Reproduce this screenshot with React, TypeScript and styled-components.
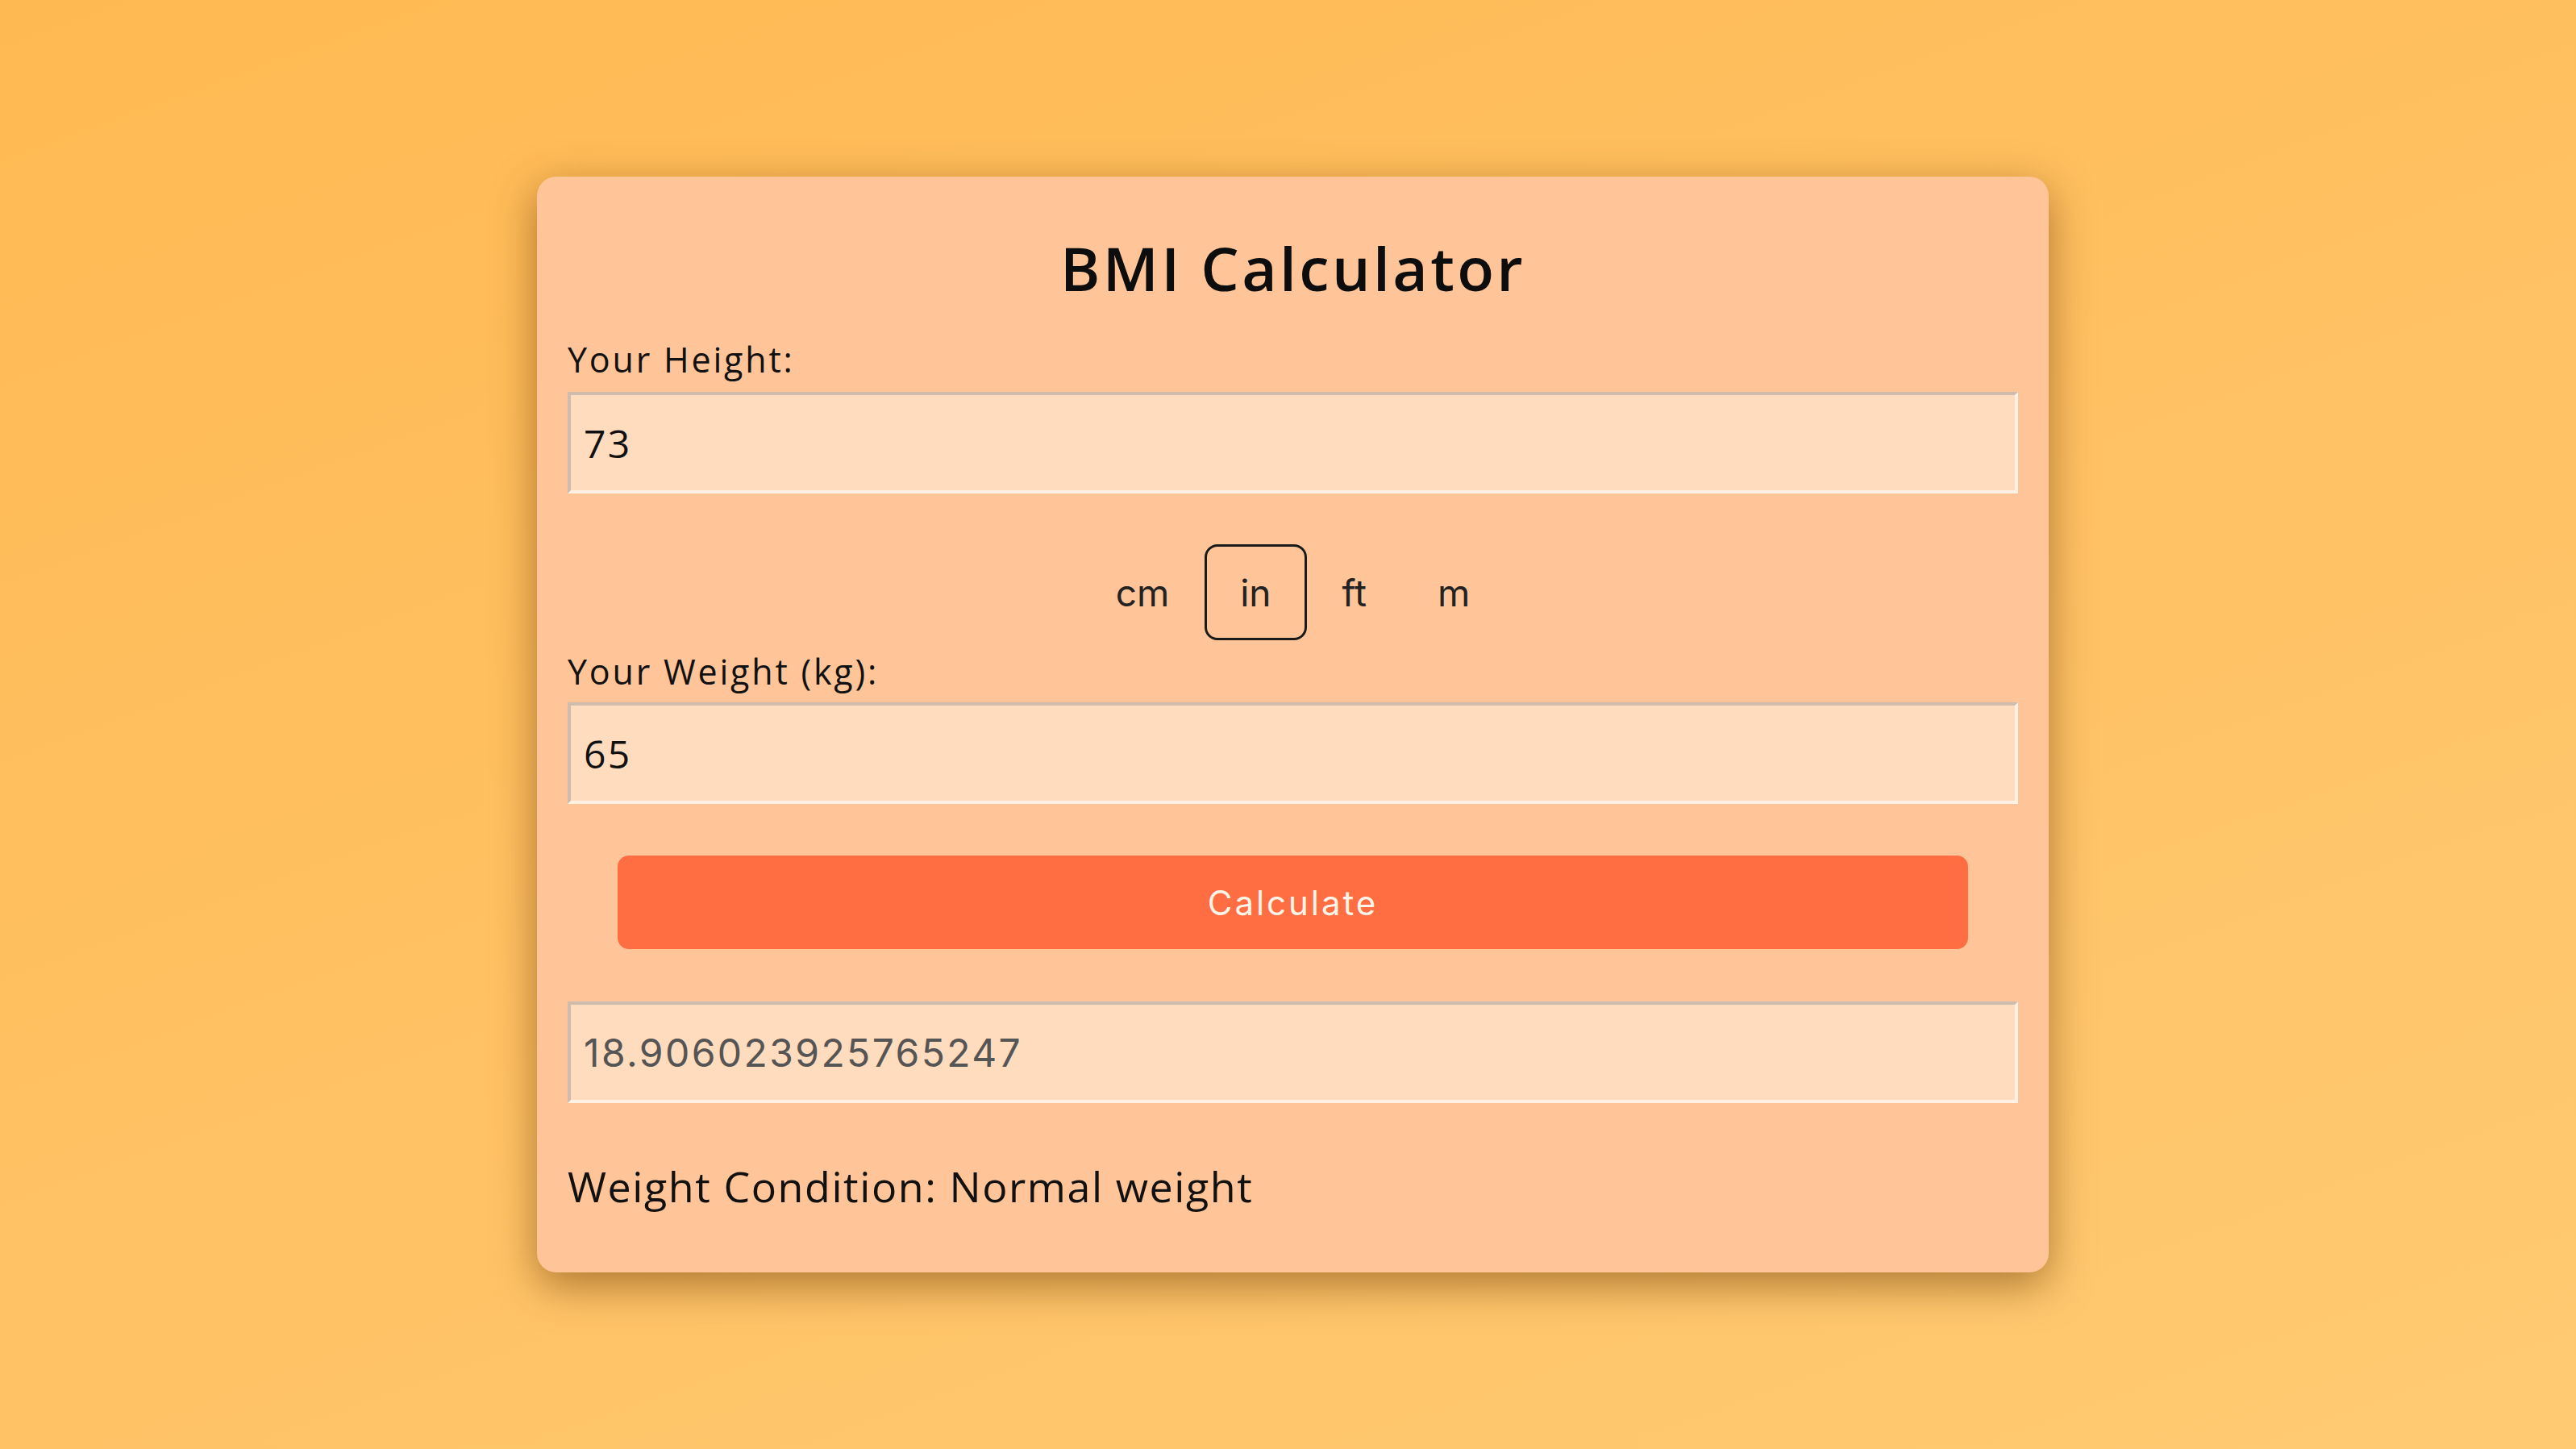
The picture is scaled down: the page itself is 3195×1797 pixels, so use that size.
import React, { useState } from "react";
import styled, { createGlobalStyle } from "styled-components";

const GlobalStyle = createGlobalStyle`
  html, body {
    margin: 0;
    padding: 0;
  }
  body {
    font-family: "Open Sans", "Noto Sans", sans-serif;
    color: #111;
  }
  * { box-sizing: border-box; }
`;

const Page = styled.div`
  min-height: 100vh;
  display: flex;
  align-items: center;
  justify-content: center;
  padding-left: 12px;
  background: linear-gradient(160deg, #ffb952 0%, #ffc163 50%, #ffca72 100%);
`;

const Card = styled.div`
  width: 1875px;
  padding: 68px 38px 76px;
  background: #ffc599;
  border-radius: 24px;
  box-shadow: 0 16px 52px rgba(100, 50, 0, 0.52);
  display: flex;
  flex-direction: column;
`;

const Title = styled.h1`
  margin: 0 0 44px;
  font-size: 75px;
  line-height: 90px;
  font-weight: 600;
  letter-spacing: 0.045em;
  text-align: center;
  color: #0d0d0d;
`;

const Label = styled.label<{ $gap: number }>`
  display: block;
  margin: 0 0 ${(p) => p.$gap}px;
  font-size: 43px;
  line-height: 50px;
  font-weight: 500;
  letter-spacing: 0.065em;
  color: #111;
`;

const Field = styled.input<{ $result?: boolean }>`
  display: block;
  width: 100%;
  height: 126px;
  margin: 0;
  padding: 0 16px;
  border-style: solid;
  border-width: 4px;
  border-color: #cfbcac #fff1e3 #fff1e3 #cfbcac;
  background: #ffdcbd;
  outline: none;
  font-family: ${(p) => (p.$result ? '"Inter", "Roboto", sans-serif' : '"Open Sans", sans-serif')};
  font-size: 48px;
  font-weight: ${(p) => (p.$result ? 400 : 500)};
  letter-spacing: 0.05em;
  color: ${(p) => (p.$result ? "#555" : "#111")};
`;

const Units = styled.div`
  display: flex;
  justify-content: center;
  margin: 63px 0 14px;
`;

const UnitButton = styled.button<{ $active: boolean }>`
  height: 119px;
  padding: 0 41px;
  border: 3px solid ${(p) => (p.$active ? "#1a1a1a" : "transparent")};
  border-radius: 16px;
  background: transparent;
  font-family: "Inter", "Roboto", sans-serif;
  font-size: 46px;
  color: #222;
  cursor: pointer;
`;

const CalcButton = styled.button`
  align-self: center;
  width: 1675px;
  height: 116px;
  margin: 64px 0 65px;
  border: none;
  border-radius: 14px;
  background: #ff6d42;
  color: #fff4e8;
  font-family: "Inter", "Roboto", sans-serif;
  font-size: 42px;
  letter-spacing: 0.07em;
  cursor: pointer;
`;

const Condition = styled.p`
  margin: 72px 0 0;
  font-size: 52px;
  line-height: 62px;
  font-weight: 500;
  letter-spacing: 0.03em;
  color: #111;
`;

export default function App() {
  const [unit, setUnit] = useState("in");
  const units = ["cm", "in", "ft", "m"];
  return (
    <>
      <GlobalStyle />
      <Page>
        <Card>
          <Title>BMI Calculator</Title>
          <Label $gap={15}>Your Height:</Label>
          <Field type="text" value="73" readOnly />
          <Units>
            {units.map((u) => (
              <UnitButton key={u} $active={u === unit} onClick={() => setUnit(u)}>
                {u}
              </UnitButton>
            ))}
          </Units>
          <Label $gap={13}>Your Weight (kg):</Label>
          <Field type="text" value="65" readOnly />
          <CalcButton>Calculate</CalcButton>
          <Field type="text" value="18.906023925765247" readOnly $result />
          <Condition>Weight Condition: Normal weight</Condition>
        </Card>
      </Page>
    </>
  );
}
